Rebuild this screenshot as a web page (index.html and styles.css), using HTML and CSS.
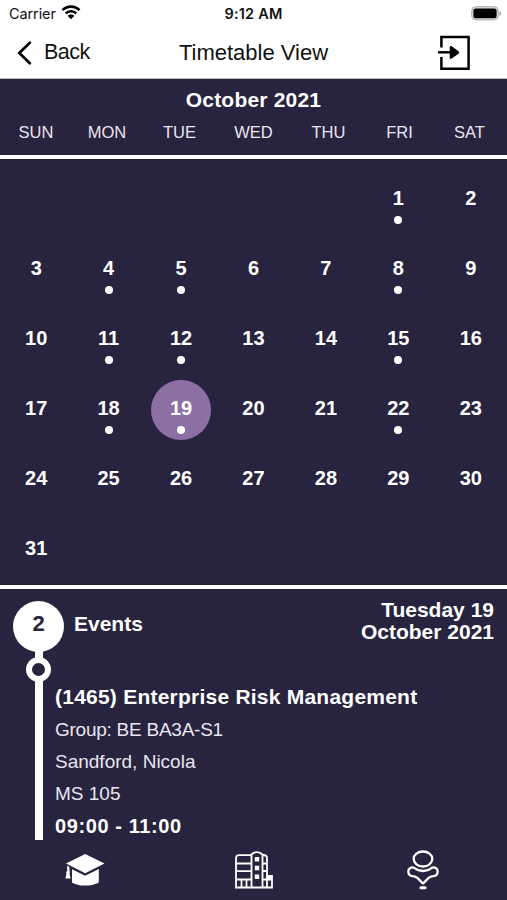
FILE: index.html
```html
<!DOCTYPE html>
<html lang="en">
<head>
    <meta charset="UTF-8">
    <meta name="viewport" content="width=device-width, initial-scale=1.0">
    <title>Timetable View</title>
    <link rel="stylesheet" href="styles.css">
</head>
<body>
    <div class="status-bar">
        <div class="carrier">
            <span>Carrier</span>
            <svg width="20" height="15" viewBox="0 0 20 15">
                <path d="M1.5 5.2a12 12 0 0 1 17 0M4.7 8.4a7.5 7.5 0 0 1 10.6 0" fill="none" stroke="#000" stroke-width="2.6"/>
                <path d="M6.6 10.8a4.8 4.8 0 0 1 6.8 0L10 14.2z"/>
            </svg>
        </div>
        <div class="time">9:12 AM</div>
        <svg class="battery" width="31" height="15" viewBox="0 0 31 15">
            <rect x=".7" y=".7" width="26.6" height="13.2" rx="4" fill="#ddd" stroke="#aaa"/>
            <rect x="2.4" y="2.4" width="23.2" height="9.8" rx="2.2"/>
            <path d="M28.5 5v5q1.8-.8 1.8-2.5T28.5 5z" fill="#aaa"/>
        </svg>
    </div>

    <header class="navbar">
        <a class="back">
            <svg width="15" height="24" viewBox="0 0 15 24">
                <path d="M12.8 1.8 2.3 12l10.5 10.2" fill="none" stroke="#000" stroke-width="2.7" stroke-linecap="round"/>
            </svg>
            <span>Back</span>
        </a>
        <h1 class="title">Timetable View</h1>
        <svg class="exit" width="34" height="36" viewBox="0 0 34 36">
            <path d="M4.4 12.5V2h27.2v31.8H4.4V22" fill="none" stroke="#000" stroke-width="2.5"/>
            <path d="M1 17.3h12" stroke="#000" stroke-width="2.4"/>
            <path d="M13.2 11.8v11.5l1.5-.3 6.9-4.8v-1.4L14 11.2z" stroke="#000" stroke-linejoin="round"/>
        </svg>
    </header>

    <div class="calendar-header">
        <h2 class="month">October 2021</h2>
        <div class="weekdays">
            <span>SUN</span><span>MON</span><span>TUE</span><span>WED</span><span>THU</span><span>FRI</span><span>SAT</span>
        </div>
    </div>

    <div class="calendar">
        <div class="day first event">1</div>
        <div class="day">2</div>
        <div class="day">3</div>
        <div class="day event">4</div>
        <div class="day event">5</div>
        <div class="day">6</div>
        <div class="day">7</div>
        <div class="day event">8</div>
        <div class="day">9</div>
        <div class="day">10</div>
        <div class="day event">11</div>
        <div class="day event">12</div>
        <div class="day">13</div>
        <div class="day">14</div>
        <div class="day event">15</div>
        <div class="day">16</div>
        <div class="day">17</div>
        <div class="day event">18</div>
        <div class="day event selected">19</div>
        <div class="day">20</div>
        <div class="day">21</div>
        <div class="day event">22</div>
        <div class="day">23</div>
        <div class="day">24</div>
        <div class="day">25</div>
        <div class="day">26</div>
        <div class="day">27</div>
        <div class="day">28</div>
        <div class="day">29</div>
        <div class="day">30</div>
        <div class="day">31</div>
    </div>

    <div class="events">
        <div class="timeline">
            <div class="count">2</div>
            <div class="stem"></div>
            <div class="ring"></div>
            <div class="line"></div>
        </div>
        <div class="events-body">
            <div class="events-header">
                <span class="events-label">Events</span>
                <span class="events-date">Tuesday 19<br>October 2021</span>
            </div>
            <div class="event-info">
                <h3 class="event-name">(1465) Enterprise Risk Management</h3>
                <p class="group">Group: BE BA3A-S1</p>
                <p>Sandford, Nicola</p>
                <p>MS 105</p>
                <p class="hours">09:00 - 11:00</p>
            </div>
        </div>
    </div>

    <nav class="tabs">
        <a>
            <svg width="40" height="34" viewBox="0 0 40 34">
                <path d="M1 10.4 20.2 1 39.5 10.4 20.2 20.2z"/>
                <path d="M7 16.2 20.2 22.7 33.8 16v13.5Q29 32.6 20.2 32.6T7 29.5z"/>
                <path d="M2.2 12.5 4.4 14v4.2l.9.8-.9 1 1.2 5.5H.4L1.6 20l-.8-1 1.4-.8z"/>
            </svg>
        </a>
        <a>
            <svg width="38" height="38" viewBox="0 0 38 38" fill="none" stroke="#fff" stroke-width="1.8">
                <path d="M16.5 4.2H4Q1 4.2 1 7.2V36.5h36V25h-5V7q0-3-4-3"/>
                <path d="M1 12.5h15.500M1 20.2h15.5M1 28.5h15.5M6.5 29v7.5M11.5 29v7.5"/>
                <path d="M16.5 36.5V3.5q2.5-2.4 5.5-2.4t5.5 2.4v33M27 12.5h5M27 20h5M27 28.5h10M32 25v11.5"/>
                <path d="M19.8 6h4.4v4.4h-4.4zM19.8 14.8h4.4v4.4h-4.4zM19.8 23.6h4.4V28h-4.4zM32 24.5h5v4h-5z" fill="#fff" stroke="none"/>
            </svg>
        </a>
        <a>
            <svg width="32" height="40" viewBox="0 0 32 40" fill="none" stroke="#fff" stroke-width="2.3">
                <ellipse cx="16" cy="9" rx="9.3" ry="7.5"/>
                <path d="M7.5 18Q11 21 16 21t8.5-3c3-1.5 6.2.5 6.2 3.5 0 3.8-2.7 4.8-5.7 4.8-4 .4-5.5 4.2-9 7.2-3.5-3-5-6.8-9-7.2-3 0-5.7-1-5.7-4.8 0-3 3.2-5 6.2-3.5z" stroke-linejoin="round"/>
                <path d="M14 37.8h4" stroke-width="3" stroke-linecap="round"/>
            </svg>
        </a>
    </nav>
</body>
</html>
```
FILE: styles.css
```css
* {
    box-sizing: border-box;
}

body {
    margin: 0;
    height: 900px;
    overflow: hidden;
    display: flex;
    flex-direction: column;
    background-color: #28233f;
    color: #fff;
    font-family: "Liberation Sans", Arial, sans-serif;
}

h1, h2, h3, p {
    margin: 0;
}

svg {
    display: block;
}

.status-bar {
    height: 27px;
    padding: 0 5px 0 9px;
    display: grid;
    grid-template-columns: 1fr auto 1fr;
    align-items: center;
    background-color: #fff;
    color: #111;
    font-family: Inter, sans-serif;
    font-size: 14.5px;
}

.carrier {
    display: flex;
    align-items: center;
    gap: 5px;
    letter-spacing: -0.1px;
}

.carrier svg {
    margin-top: -2px;
}

.time {
    margin-left: -4px;
    font-weight: 600;
    letter-spacing: 0.2px;
}

.battery {
    justify-self: end;
}

.navbar {
    height: 52px;
    padding: 0 36px 0 17px;
    display: grid;
    grid-template-columns: 1fr auto 1fr;
    align-items: center;
    background-color: #fff;
    color: #111;
    font-size: 21.5px;
    border-bottom: 1px solid #bbb;
}

.back {
    display: flex;
    align-items: center;
    gap: 12px;
    letter-spacing: -0.5px;
}

.title {
    margin-left: 19px;
    font-size: 22px;
    font-weight: 400;
}

.exit {
    justify-self: end;
}

.calendar-header {
    height: 80px;
    padding-top: 8px;
    border-bottom: 4px solid #fff;
}

.month {
    font-size: 21px;
    line-height: 26px;
    letter-spacing: 0.2px;
    text-align: center;
}

.weekdays {
    display: grid;
    grid-template-columns: 72px 70px 75px 73px 77px 65px 75px;
    padding-top: 8px;
    font-size: 16.5px;
    line-height: 22px;
    text-align: center;
    color: #e8e6f0;
}

.calendar {
    height: 430px;
    padding: 9px 0 0;
    display: grid;
    grid-template-columns: repeat(7, 1fr);
    grid-auto-rows: 70px;
    justify-items: center;
    border-bottom: 4px solid #fff;
}

.day {
    width: 60px;
    height: 60px;
    padding-top: 16px;
    margin-top: 2px;
    border-radius: 50%;
    font-size: 20px;
    font-weight: 700;
    line-height: 24px;
    text-align: center;
}

.first {
    grid-column: 6;
}

.event::after {
    content: "";
    display: block;
    width: 8px;
    height: 8px;
    margin: 6px auto 0;
    border-radius: 50%;
    background-color: #fff;
}

.selected {
    background-color: #8c70a3;
}

.events {
    height: 251px;
    padding: 12px 13px 0;
    display: flex;
}

.timeline {
    width: 51px;
    display: flex;
    flex-direction: column;
    align-items: center;
}

.count {
    width: 51px;
    height: 51px;
    border-radius: 50%;
    background-color: #fff;
    color: #28233f;
    font-size: 22px;
    font-weight: 700;
    line-height: 46px;
    text-align: center;
}

.stem, .line {
    width: 8px;
    background-color: #fff;
}

.stem {
    height: 7px;
    margin-top: -1px;
}

.ring {
    width: 25px;
    height: 25px;
    margin-top: -1px;
    border: 6px solid #fff;
    border-radius: 50%;
}

.line {
    flex: 1;
    margin-top: -1px;
}

.events-body {
    flex: 1;
}

.events-header {
    height: 80px;
    padding-left: 10px;
    display: flex;
    justify-content: space-between;
    font-size: 21px;
    font-weight: 700;
}

.events-label {
    padding-top: 11px;
}

.events-date {
    margin-top: -2px;
    line-height: 22px;
    text-align: right;
}

/* details sit closer to the line than the header label */
.event-info {
    margin-left: -9px;
    font-size: 19px;
    line-height: 32px;
    color: #e8e6f0;
}

.event-name {
    font-size: 21px;
    line-height: 32px;
    letter-spacing: 0.23px;
    color: #fff;
}

.group {
    margin-top: 1px;
    letter-spacing: -0.25px;
}

.hours {
    font-size: 20px;
    font-weight: 700;
    letter-spacing: 0.6px;
    color: #fff;
}

.tabs {
    flex: 1;
    display: grid;
    grid-template-columns: repeat(3, 1fr);
    justify-items: center;
    padding-top: 9px;
    fill: #fff;
}

.tabs a {
    height: 42px;
    display: flex;
    align-items: center;
}
```
